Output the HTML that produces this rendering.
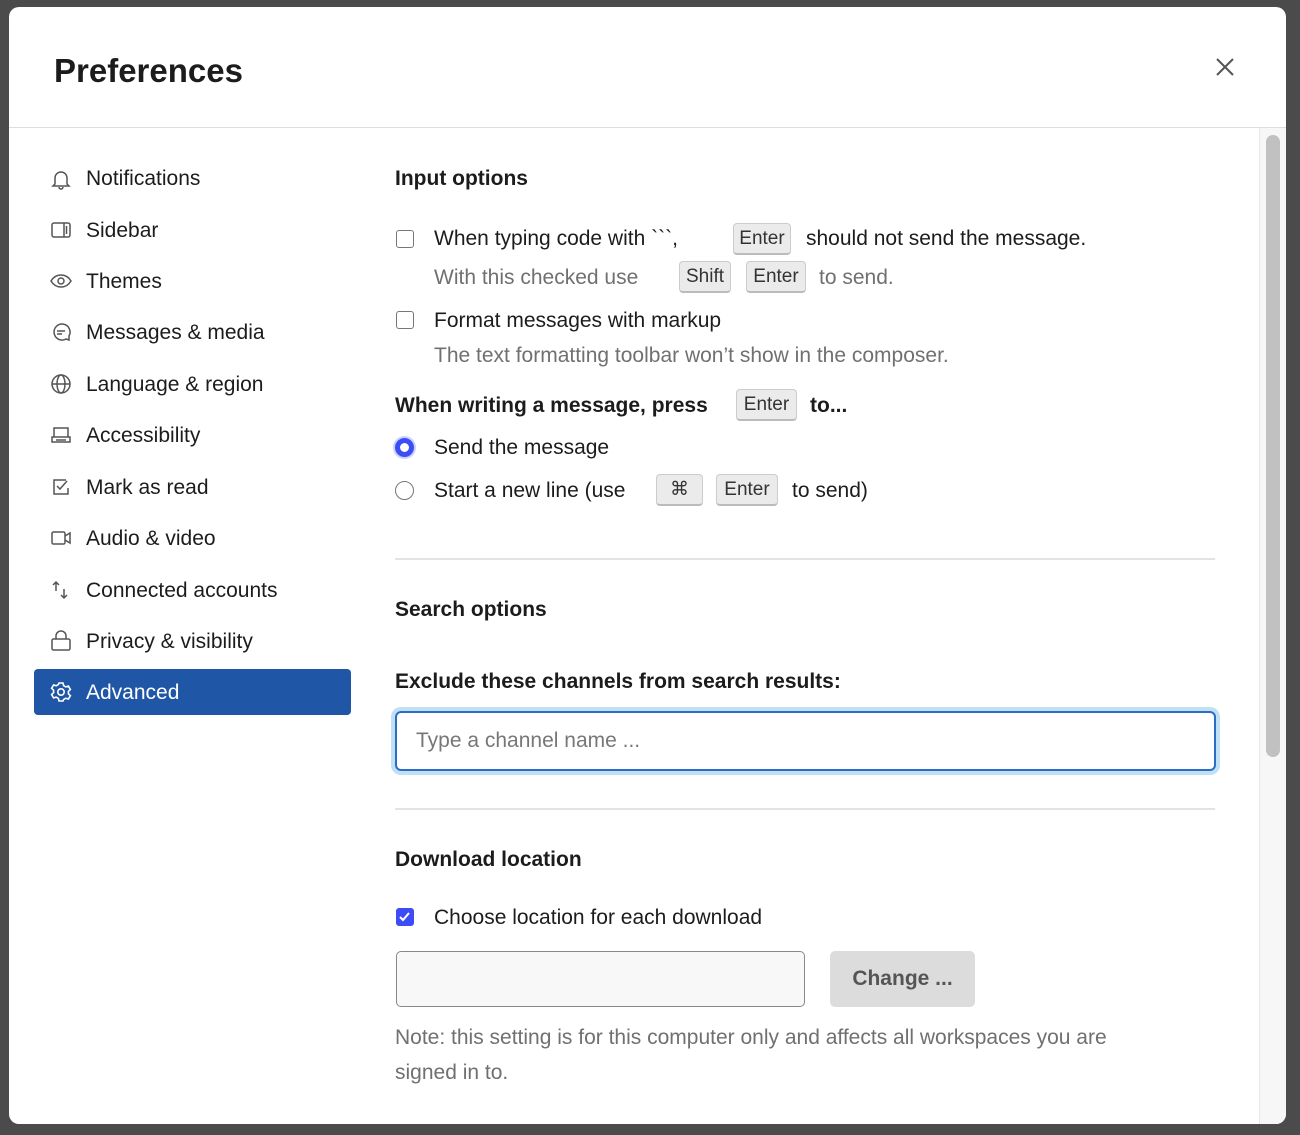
<!DOCTYPE html>
<html><head><meta charset="utf-8"><style>
*{box-sizing:border-box;margin:0;padding:0}
body{width:1300px;height:1135px;background:#4b4b4b;font-family:"Liberation Sans",sans-serif;position:relative;overflow:hidden;color:#1d1c1d}
.modal{position:absolute;left:9px;top:7px;width:1277px;height:1117px;background:#fff;border-radius:10px;overflow:hidden}
.a{position:absolute;white-space:nowrap;line-height:26px;font-size:21px;margin-top:1px}
.b{font-weight:bold}
.g{color:#707070}
.kbd{position:absolute;background:#ebebeb;border:1px solid #ccc;border-bottom:2px solid #bbb;border-radius:4px;font-size:19px;line-height:29px;text-align:center;color:#333}
.cb{position:absolute;width:18px;height:18px;border:1.5px solid #777;border-radius:3px;background:#fff}
.rd{position:absolute;width:19px;height:19px;border:1.5px solid #777;border-radius:50%}
.hr{position:absolute;height:2px;background:#e3e3e3}
.nav{position:absolute;left:77px;font-size:21px;line-height:26px;color:#1d1c1d;margin-top:1px}
.ic{position:absolute;left:41px}
</style></head><body>
<div class="modal">
<div class="a b" style="left:45px;top:43px;font-size:33px;line-height:40px">Preferences</div>
<svg style="position:absolute;left:1206px;top:50px" width="20" height="20" viewBox="0 0 20 20"><path d="M2 2L18 18M18 2L2 18" stroke="#555" stroke-width="2"/></svg>
<div class="hr" style="left:0;top:120px;width:1277px;height:1px;background:#ddd"></div>
<div style="position:absolute;left:1250px;top:121px;width:27px;height:1000px;background:#f7f7f7;border-left:1px solid #e8e8e8"></div>
<div style="position:absolute;left:1257px;top:128px;width:14px;height:622px;background:#c1c1c1;border-radius:7px"></div>

<div style="position:absolute;left:25px;top:662px;width:317px;height:46px;background:#1f57a6;border-radius:4px"></div>
<svg class="ic" style="top:161px" width="22" height="22" viewBox="0 0 22 22" fill="none" stroke="#555" stroke-width="1.5"><path d="M5 16V10a6 6 0 0 1 12 0v6l2 2H3zM9 19a2 2 0 0 0 4 0"/></svg>
<div class="nav" style="top:158px">Notifications</div>
<svg class="ic" style="top:212px" width="22" height="22" viewBox="0 0 22 22" fill="none" stroke="#555" stroke-width="1.5"><rect x="2" y="4" width="18" height="14" rx="2"/><path d="M14 4v14M16.5 7v8"/></svg>
<div class="nav" style="top:210px">Sidebar</div>
<svg class="ic" style="top:263px" width="22" height="22" viewBox="0 0 22 22" fill="none" stroke="#555" stroke-width="1.5"><path d="M1 11c3-5 7-6 10-6s7 1 10 6c-3 5-7 6-10 6s-7-1-10-6z"/><circle cx="11" cy="11" r="3"/></svg>
<div class="nav" style="top:261px">Themes</div>
<svg class="ic" style="top:314px" width="22" height="22" viewBox="0 0 22 22" fill="none" stroke="#555" stroke-width="1.5"><path d="M19 19l-3-1a8 8 0 1 1 3-3z"/><path d="M7 10h8M7 13h5"/></svg>
<div class="nav" style="top:312px">Messages &amp; media</div>
<svg class="ic" style="top:366px" width="22" height="22" viewBox="0 0 22 22" fill="none" stroke="#555" stroke-width="1.5"><circle cx="11" cy="11" r="9"/><ellipse cx="11" cy="11" rx="4" ry="9"/><path d="M2 11h18"/></svg>
<div class="nav" style="top:364px">Language &amp; region</div>
<svg class="ic" style="top:417px" width="22" height="22" viewBox="0 0 22 22" fill="none" stroke="#555" stroke-width="1.5"><path d="M4 13V4h14v9M2 13h18v5H2z"/><path d="M6 16h10"/></svg>
<div class="nav" style="top:415px">Accessibility</div>
<svg class="ic" style="top:469px" width="22" height="22" viewBox="0 0 22 22" fill="none" stroke="#555" stroke-width="1.5"><path d="M16 4H4v14h14v-6"/><path d="M7 10l3 3 7-8"/></svg>
<div class="nav" style="top:467px">Mark as read</div>
<svg class="ic" style="top:520px" width="22" height="22" viewBox="0 0 22 22" fill="none" stroke="#555" stroke-width="1.5"><rect x="2" y="5" width="13" height="12" rx="1.5"/><path d="M15 9l5-3v10l-5-3"/></svg>
<div class="nav" style="top:518px">Audio &amp; video</div>
<svg class="ic" style="top:572px" width="22" height="22" viewBox="0 0 22 22" fill="none" stroke="#555" stroke-width="1.5"><path d="M6 12V3M3 6l3-3 3 3M14 10v9M11 16l3 3 3-3"/></svg>
<div class="nav" style="top:570px">Connected accounts</div>
<svg class="ic" style="top:623px" width="22" height="22" viewBox="0 0 22 22" fill="none" stroke="#555" stroke-width="1.5"><rect x="2" y="9" width="18" height="11" rx="1.5"/><path d="M6 9V6a5 5 0 0 1 10 0v3"/></svg>
<div class="nav" style="top:621px">Privacy &amp; visibility</div>
<svg class="ic" style="top:674px" width="22" height="22" viewBox="0 0 22 22" fill="none" stroke="#fff" stroke-width="1.6"><path d="M9 2h4l.6 2.6 2.2 1.3 2.6-.8 2 3.4-2 1.8v2.5l2 1.8-2 3.4-2.6-.8-2.2 1.3L13 20H9l-.6-2.6-2.2-1.3-2.6.8-2-3.4 2-1.8V9.2l-2-1.8 2-3.4 2.6.8 2.2-1.3z"/><circle cx="11" cy="11" r="3.2"/></svg>
<div class="nav" style="top:672px;color:#fff">Advanced</div>

<div class="a b" style="left:386px;top:158px">Input options</div>
<div class="cb" style="left:387px;top:223px"></div>
<div class="a" style="left:425px;top:218px">When typing code with &#96;&#96;&#96;,</div>
<div class="kbd" style="left:724px;top:216px;width:58px">Enter</div>
<div class="a" style="left:797px;top:218px">should not send the message.</div>
<div class="a g" style="left:425px;top:257px">With this checked use</div>
<div class="kbd" style="left:670px;top:254px;width:52px">Shift</div>
<div class="kbd" style="left:737px;top:254px;width:60px">Enter</div>
<div class="a g" style="left:810px;top:257px">to send.</div>
<div class="cb" style="left:387px;top:304px"></div>
<div class="a" style="left:425px;top:300px">Format messages with markup</div>
<div class="a g" style="left:425px;top:335px">The text formatting toolbar won’t show in the composer.</div>
<div class="a b" style="left:386px;top:385px">When writing a message, press</div>
<div class="kbd" style="left:727px;top:382px;width:61px">Enter</div>
<div class="a b" style="left:801px;top:385px">to...</div>
<div class="rd" style="left:386px;top:431px;border:5px solid #3d4df5;box-shadow:0 0 0 2px #c9d2ff"></div>
<div class="a" style="left:425px;top:427px">Send the message</div>
<div class="rd" style="left:386px;top:474px"></div>
<div class="a" style="left:425px;top:470px">Start a new line (use</div>
<div class="kbd" style="left:647px;top:467px;width:47px">⌘</div>
<div class="kbd" style="left:707px;top:467px;width:62px">Enter</div>
<div class="a" style="left:783px;top:470px">to send)</div>
<div class="hr" style="left:386px;top:551px;width:820px"></div>
<div class="a b" style="left:386px;top:589px">Search options</div>
<div class="a b" style="left:386px;top:661px">Exclude these channels from search results:</div>
<div style="position:absolute;left:386px;top:704px;width:821px;height:60px;border:2px solid #2b6cc4;border-radius:6px;box-shadow:0 0 0 4px #bfe0f5"></div>
<div class="a" style="left:407px;top:720px;color:#777">Type a channel name ...</div>
<div class="hr" style="left:386px;top:801px;width:820px"></div>
<div class="a b" style="left:386px;top:839px">Download location</div>
<div class="cb" style="left:387px;top:901px;background:#3d4df5;border-color:#3d4df5"><svg width="15" height="15" viewBox="0 0 15 15" style="position:absolute;left:0;top:0"><path d="M3 8l3 3 6-7" stroke="#fff" stroke-width="2" fill="none"/></svg></div>
<div class="a" style="left:425px;top:897px">Choose location for each download</div>
<div style="position:absolute;left:387px;top:944px;width:409px;height:56px;background:#f8f8f8;border:1.5px solid #888;border-radius:5px"></div>
<div style="position:absolute;left:821px;top:944px;width:145px;height:56px;background:#dcdcdc;border-radius:5px;font-weight:bold;font-size:21px;line-height:56px;text-align:center;color:#555">Change ...</div>
<div class="a g" style="left:386px;top:1012px;line-height:35px;white-space:normal;width:770px">Note: this setting is for this computer only and affects all workspaces you are signed in to.</div>
</div>
</body></html>
